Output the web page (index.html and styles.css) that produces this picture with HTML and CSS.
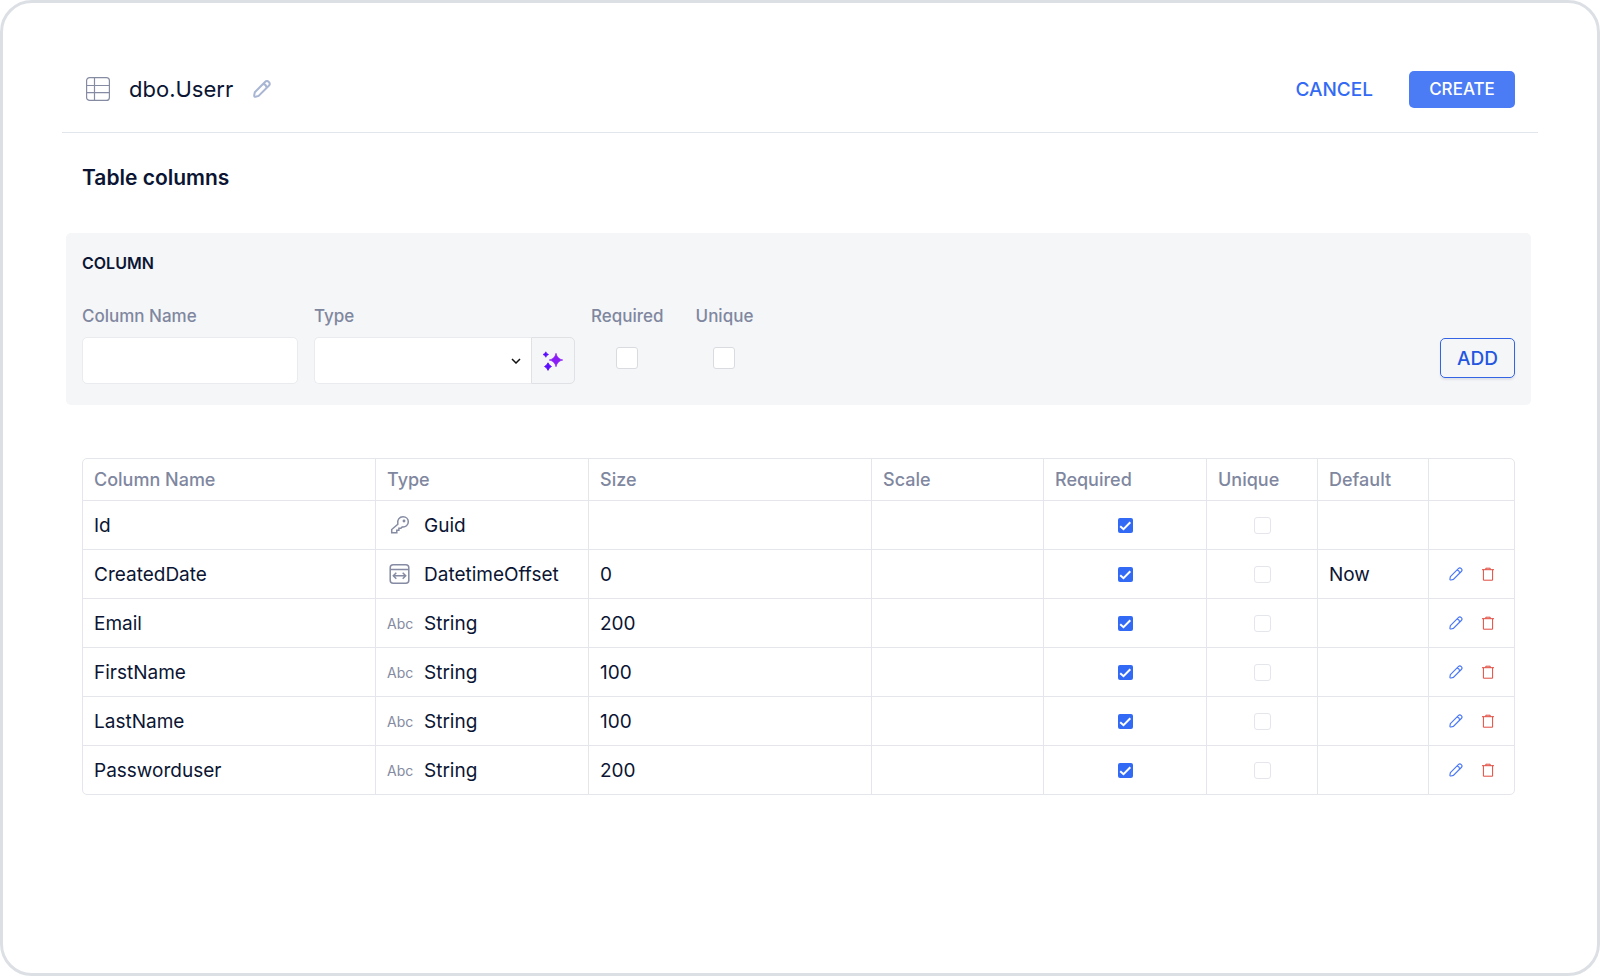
FILE: index.html
```
<!DOCTYPE html>
<html lang="en">
<head>
    <meta charset="UTF-8">
    <meta name="viewport" content="width=device-width, initial-scale=1.0">
    <title>dbo.Userr</title>
    <link rel="stylesheet" href="styles.css">
</head>
<body>
    <!-- shared icons -->
    <svg class="sprite" aria-hidden="true">
        <symbol id="icon-pencil" viewBox="0 0 18 18">
            <path d="M1.800 12.300 12 2a2.500 2.500 0 0 1 3.800 3.800L5.600 15.900 2.500 16.700Q1 16.900 1.200 15.400zM10.200 4.200Q13 3.800 13.600 7.600"/>
        </symbol>
        <symbol id="icon-trash" viewBox="0 0 13 14">
            <path d="M.5 2.700h12M4.300 2.500V1.200h4.400v1.300M1.900 2.700v10.500h9.200V2.700"/>
        </symbol>
    </svg>

    <main class="window">
        <header class="header">
            <svg class="table-icon" viewBox="0 0 24 24">
                <rect x=".6" y=".6" width="22.800" height="22.800" rx="3"/>
                <path d="M8.500.6v22.800M.6 8.500h22.800M.6 15.700h22.800"/>
            </svg>
            <h1>dbo.Userr</h1>
            <button class="icon-btn rename" aria-label="Rename table"><svg><use href="#icon-pencil"/></svg></button>
            <div class="header-actions">
                <button class="btn-link">CANCEL</button>
                <button class="btn-primary">CREATE</button>
            </div>
        </header>

        <h2>Table columns</h2>

        <form class="panel">
            <h3>COLUMN</h3>
            <div class="fields">
                <div class="field">
                    <label for="name">Column Name</label>
                    <input class="text-input" type="text" id="name">
                </div>
                <div class="field">
                    <label for="type">Type</label>
                    <div class="type-row">
                        <div class="select">
                            <select id="type">
                                <option></option>
                                <option>Guid</option>
                                <option>DatetimeOffset</option>
                                <option>String</option>
                            </select>
                            <svg class="chevron" viewBox="0 0 10 6"><path d="M1 1l4 4 4-4"/></svg>
                        </div>
                        <button type="button" class="ai-btn" aria-label="Suggest type">
                            <svg viewBox="0 0 20 20">
                                <path fill="#8a1cf5" stroke="#8a1cf5" stroke-width=".6" d="M13 2.200Q14.200 7.800 19.800 9 14.200 10.200 13 15.800 11.800 10.200 6.200 9 11.800 7.800 13 2.200z"/>
                                <path fill="#5a0cff" stroke="#5a0cff" stroke-width=".6" d="M2.800.8Q3.500 2.700 5.600 3.500 3.500 4.300 2.800 6.300 2.100 4.300 0 3.500 2.100 2.700 2.800.8z"/>
                                <path fill="#5a0cff" stroke="#5a0cff" stroke-width=".8" d="M5 11.800Q5.900 14.200 8.500 15.500 5.900 16.600 5 19.400 4.100 16.600 1.500 15.500 4.100 14.200 5 11.800z"/>
                            </svg>
                        </button>
                    </div>
                </div>
                <div class="field check-field required">
                    <label for="required">Required</label>
                    <input type="checkbox" id="required">
                </div>
                <div class="field check-field">
                    <label for="unique">Unique</label>
                    <input type="checkbox" id="unique">
                </div>
                <button type="button" class="btn-outline">ADD</button>
            </div>
        </form>

        <div class="table-box">
            <table>
                <colgroup>
                    <col class="col-name"><col class="col-type"><col class="col-size"><col class="col-scale">
                    <col class="col-required"><col class="col-unique"><col class="col-default"><col class="col-actions">
                </colgroup>
                <thead>
                    <tr><th>Column Name</th><th>Type</th><th>Size</th><th>Scale</th><th>Required</th><th>Unique</th><th>Default</th><th></th></tr>
                </thead>
                <tbody>
                    <tr>
                        <td>Id</td>
                        <td><div class="type">
                            <svg class="type-icon" viewBox="0 0 24 24"><path d="M10.300 11.200C9.300 6.800 12 3.800 15.500 3.800c3.200 0 5.300 2.300 5.300 5 0 3.300-2.700 5.500-6 5.100l-1.400 1.300h-2v2H9.300v2.500H4.200v-3.200z"/><circle cx="16.500" cy="8" r=".7"/></svg>
                            Guid</div></td>
                        <td></td>
                        <td></td>
                        <td class="check"><input type="checkbox" aria-label="Id required" checked></td>
                        <td class="check"><input type="checkbox" aria-label="Id unique"></td>
                        <td></td>
                        <td></td>
                    </tr>
                    <tr>
                        <td>CreatedDate</td>
                        <td><div class="type">
                            <svg class="type-icon" viewBox="0 0 24 24"><rect x="2.700" y="2.700" width="18.600" height="18.600" rx="3"/><path d="M2.700 7.500h18.600M6 13.800h12M8.800 10.800l-3 3 3 3M15.200 10.800l3 3-3 3"/></svg>
                            DatetimeOffset</div></td>
                        <td>0</td>
                        <td></td>
                        <td class="check"><input type="checkbox" aria-label="CreatedDate required" checked></td>
                        <td class="check"><input type="checkbox" aria-label="CreatedDate unique"></td>
                        <td>Now</td>
                        <td><div class="actions">
                            <button class="icon-btn edit" aria-label="Edit CreatedDate"><svg><use href="#icon-pencil"/></svg></button>
                            <button class="icon-btn delete" aria-label="Delete CreatedDate"><svg><use href="#icon-trash"/></svg></button>
                        </div></td>
                    </tr>
                    <tr>
                        <td>Email</td>
                        <td><div class="type"><span class="abc">Abc</span>String</div></td>
                        <td>200</td>
                        <td></td>
                        <td class="check"><input type="checkbox" aria-label="Email required" checked></td>
                        <td class="check"><input type="checkbox" aria-label="Email unique"></td>
                        <td></td>
                        <td><div class="actions">
                            <button class="icon-btn edit" aria-label="Edit Email"><svg><use href="#icon-pencil"/></svg></button>
                            <button class="icon-btn delete" aria-label="Delete Email"><svg><use href="#icon-trash"/></svg></button>
                        </div></td>
                    </tr>
                    <tr>
                        <td>FirstName</td>
                        <td><div class="type"><span class="abc">Abc</span>String</div></td>
                        <td>100</td>
                        <td></td>
                        <td class="check"><input type="checkbox" aria-label="FirstName required" checked></td>
                        <td class="check"><input type="checkbox" aria-label="FirstName unique"></td>
                        <td></td>
                        <td><div class="actions">
                            <button class="icon-btn edit" aria-label="Edit FirstName"><svg><use href="#icon-pencil"/></svg></button>
                            <button class="icon-btn delete" aria-label="Delete FirstName"><svg><use href="#icon-trash"/></svg></button>
                        </div></td>
                    </tr>
                    <tr>
                        <td>LastName</td>
                        <td><div class="type"><span class="abc">Abc</span>String</div></td>
                        <td>100</td>
                        <td></td>
                        <td class="check"><input type="checkbox" aria-label="LastName required" checked></td>
                        <td class="check"><input type="checkbox" aria-label="LastName unique"></td>
                        <td></td>
                        <td><div class="actions">
                            <button class="icon-btn edit" aria-label="Edit LastName"><svg><use href="#icon-pencil"/></svg></button>
                            <button class="icon-btn delete" aria-label="Delete LastName"><svg><use href="#icon-trash"/></svg></button>
                        </div></td>
                    </tr>
                    <tr>
                        <td>Passworduser</td>
                        <td><div class="type"><span class="abc">Abc</span>String</div></td>
                        <td>200</td>
                        <td></td>
                        <td class="check"><input type="checkbox" aria-label="Passworduser required" checked></td>
                        <td class="check"><input type="checkbox" aria-label="Passworduser unique"></td>
                        <td></td>
                        <td><div class="actions">
                            <button class="icon-btn edit" aria-label="Edit Passworduser"><svg><use href="#icon-pencil"/></svg></button>
                            <button class="icon-btn delete" aria-label="Delete Passworduser"><svg><use href="#icon-trash"/></svg></button>
                        </div></td>
                    </tr>
                </tbody>
            </table>
        </div>
    </main>
</body>
</html>
```
FILE: styles.css
```
* {
    box-sizing: border-box;
}
body {
    margin: 0;
    background: #fff;
    color: #0b1533;
    font-family: Inter, sans-serif;
}
button,
input,
select {
    margin: 0;
    padding: 0;
    font-family: inherit;
}
button {
    border: none;
    background: none;
    cursor: pointer;
}
svg {
    display: block;
    fill: none;
    stroke: currentColor;
}
.sprite {
    position: absolute;
    width: 0;
    height: 0;
}
.window {
    min-height: 100vh;
    padding: 43px 59px;
    border: 3px solid #dce0e5;
    border-radius: 32px;
}

/* header */
.header {
    display: flex;
    align-items: center;
    height: 87px;
    padding: 0 23px;
    border-bottom: 1px solid #e2e6ec;
}
.table-icon {
    width: 24px;
    height: 24px;
    margin: 0 19px 0 1px;
    color: #858ba2;
    stroke-width: 1.2;
}
h1 {
    margin: 0 20px 0 0;
    font-size: 22px;
    font-weight: 400;
}
.icon-btn svg {
    width: 14px;
    height: 14px;
}
.rename {
    color: #a9b6d3;
}
.rename svg {
    width: 18px;
    height: 18px;
    stroke-width: 2;
}
.header-actions {
    display: flex;
    align-items: center;
    gap: 36px;
    margin-left: auto;
}
.btn-link {
    color: #336af5;
    font-size: 19px;
    font-weight: 500;
}
.btn-primary {
    width: 106px;
    height: 37px;
    border-radius: 5px;
    background: #4b7bf5;
    color: #fff;
    font-size: 17px;
    font-weight: 500;
}

h2 {
    margin: 32px 20px 42px;
    font-size: 21px;
    font-weight: 600;
    line-height: 26px;
}

/* new column form */
.panel {
    margin: 0 7px 0 4px;
    padding: 20px 16px 21px;
    border-radius: 5px;
    background: #f5f6f8;
}
h3 {
    margin: 0 0 33px;
    font-size: 16px;
    font-weight: 600;
    line-height: 20px;
}
.fields {
    display: flex;
    align-items: flex-start;
    gap: 16px;
}
.field label {
    display: block;
    margin-bottom: 10px;
    color: #7f879f;
    font-size: 17px;
    font-weight: 500;
    line-height: 21px;
}
.text-input {
    display: block;
    width: 216px;
    height: 47px;
    padding: 0 12px;
    border: 1px solid #e9ebee;
    border-radius: 5px;
    background: #fff;
    font-size: 17px;
}
.type-row {
    display: flex;
}
.select {
    position: relative;
    width: 217px;
}
.select select {
    width: 100%;
    height: 47px;
    padding: 0 32px 0 12px;
    border: 1px solid #e9ebee;
    border-right: none;
    border-radius: 5px 0 0 5px;
    background: #fff;
    font-size: 17px;
    appearance: none;
}
.chevron {
    position: absolute;
    top: 21px;
    right: 10px;
    width: 10px;
    height: 6px;
    color: #111;
    stroke-width: 1.5;
    pointer-events: none;
}
.ai-btn {
    display: flex;
    align-items: center;
    justify-content: center;
    width: 44px;
    height: 47px;
    border: 1px solid #dfe1e5;
    border-radius: 0 5px 5px 0;
}
.ai-btn svg {
    width: 20px;
    height: 20px;
    overflow: visible;
}
.required {
    margin-right: 16px;
}
.check-field input {
    display: block;
    width: 22px;
    height: 22px;
    margin: 20px auto 0;
    border: 1px solid #d9dbe0;
    border-radius: 3px;
    background: #fff;
    appearance: none;
}
.btn-outline {
    width: 75px;
    height: 40px;
    margin: 32px 0 0 auto;
    border: 1px solid #3463e4;
    border-radius: 5px;
    box-shadow: 0 2px 2px #dfe2e8;
    color: #2456e0;
    font-size: 19px;
    font-weight: 500;
}

/* columns table */
.table-box {
    margin: 53px 23px 0 20px;
    border: 1px solid #e4e6eb;
    border-radius: 5px;
}
table {
    width: 100%;
    border-spacing: 0;
    table-layout: fixed;
}
.col-name { width: 293px; }
.col-type { width: 213px; }
.col-size { width: 283px; }
.col-scale { width: 172px; }
.col-required { width: 163px; }
.col-unique { width: 111px; }
.col-default { width: 111px; }
.col-actions { width: 85px; }
th,
td {
    padding: 0 11px;
    border-right: 1px solid #e4e6eb;
    text-align: left;
}
th:last-child,
td:last-child {
    border-right: none;
}
th {
    height: 41px;
    color: #7f879f;
    font-size: 18px;
    font-weight: 500;
}
td {
    height: 49px;
    border-top: 1px solid #e4e6eb;
    font-size: 19px;
}
.type {
    display: flex;
    align-items: center;
    gap: 12px;
}
.type-icon,
.abc {
    width: 25px;
    color: #858ba2;
}
.type-icon {
    height: 24px;
    stroke-width: 1.5;
}
.abc {
    font-size: 14px;
}
td.check {
    padding: 0;
}
td.check input {
    display: block;
    width: 17px;
    height: 17px;
    margin: 0 auto;
    border: 1px solid #e4e6ec;
    border-radius: 3px;
    appearance: none;
}
td.check input:checked {
    width: 15px;
    height: 15px;
    border: none;
    border-radius: 2px;
    background: #336af5 url("data:image/svg+xml,%3Csvg xmlns='http://www.w3.org/2000/svg' viewBox='0 0 15 15'%3E%3Cpath d='M2.200 8.200l3.300 3 6.800-7' fill='none' stroke='white' stroke-width='2'/%3E%3C/svg%3E");
}
.actions {
    display: flex;
    justify-content: center;
    gap: 18px;
}
.edit {
    color: #4b78f5;
}
.edit svg {
    stroke-width: 1.5;
}
.delete {
    color: #e04a3f;
}
```
